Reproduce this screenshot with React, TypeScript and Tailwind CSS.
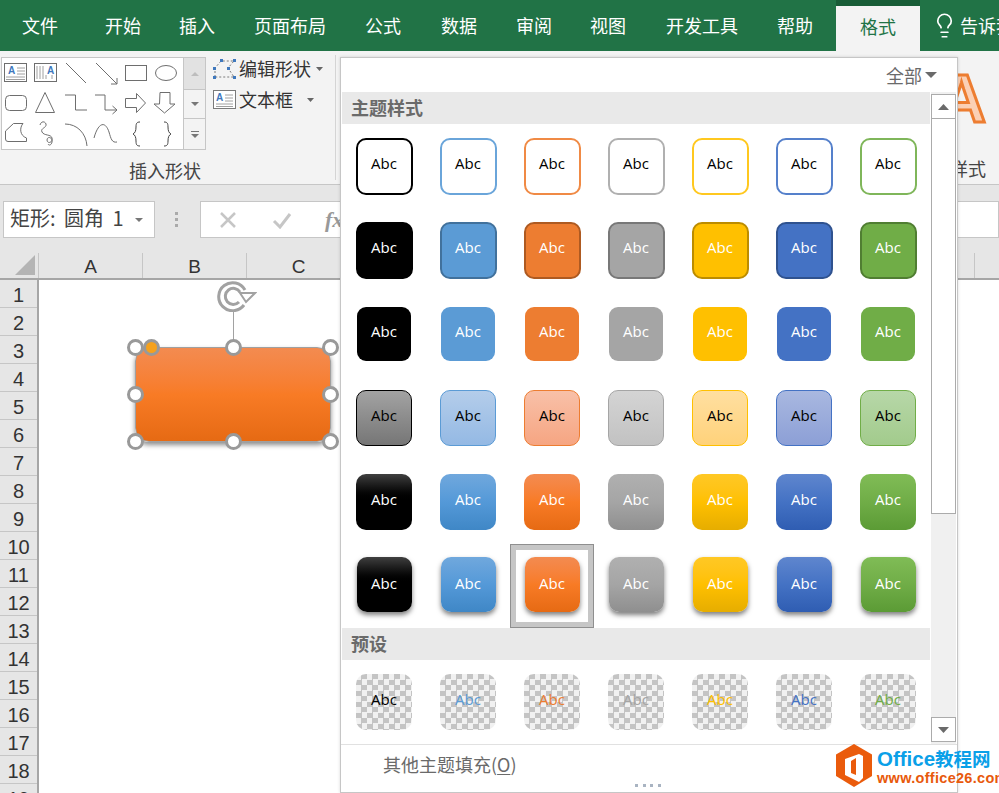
import { Lightbulb } from "lucide-react";

const CJK = "[font-family:'Noto_Sans_CJK_SC','Liberation_Sans',sans-serif]";

const TABS = [
  { label: "文件", cls: "ml-[22px]" },
  { label: "开始", cls: "ml-[47px]" },
  { label: "插入", cls: "ml-[38px]" },
  { label: "页面布局", cls: "ml-[39px]" },
  { label: "公式", cls: "ml-[39px]" },
  { label: "数据", cls: "ml-[40px]" },
  { label: "审阅", cls: "ml-[39px]" },
  { label: "视图", cls: "ml-[38px]" },
  { label: "开发工具", cls: "ml-[40px]" },
  { label: "帮助", cls: "ml-[39px]" },
];

const CHECKER =
  "bg-[conic-gradient(#c4c4c4_25%,#f1f1f1_0_50%,#c4c4c4_0_75%,#f1f1f1_0)] bg-[length:11px_11px]";

const ROW1 = ["border-black", "border-[#6aa5da]", "border-[#f08a45]", "border-[#b0b0b0]", "border-[#ffc81f]", "border-[#5580cb]", "border-[#7fb65a]"].map(
  (c) => `size-[57px] rounded-[10px] border-2 bg-white text-black ${c}`,
);

const ROW2 = [
  "border-black bg-black",
  "border-[#41719c] bg-[#5b9bd5]",
  "border-[#ae5a21] bg-[#ed7d31]",
  "border-[#787878] bg-[#a5a5a5]",
  "border-[#bc8c00] bg-[#ffc000]",
  "border-[#2f528f] bg-[#4472c4]",
  "border-[#507e32] bg-[#70ad47]",
].map((c) => `size-[57px] rounded-[10px] border-2 text-white ${c}`);

const ROW3 = ["bg-black", "bg-[#5b9bd5]", "bg-[#ed7d31]", "bg-[#a5a5a5]", "bg-[#ffc000]", "bg-[#4472c4]", "bg-[#70ad47]"].map(
  (c) => `size-[54px] rounded-[9px] text-white ${c}`,
);

const ROW4 = [
  "border-black bg-linear-to-b from-[#a3a3a3] to-[#767676]",
  "border-[#5b9bd5] bg-linear-to-b from-[#b4cdea] to-[#94b9e4]",
  "border-[#ed7d31] bg-linear-to-b from-[#f8c0a8] to-[#f6a582]",
  "border-[#a5a5a5] bg-linear-to-b from-[#d4d4d4] to-[#c2c2c2]",
  "border-[#ffc000] bg-linear-to-b from-[#ffdfa0] to-[#ffd27a]",
  "border-[#4472c4] bg-linear-to-b from-[#a9b8e0] to-[#8c9fd6]",
  "border-[#70ad47] bg-linear-to-b from-[#b7d7a8] to-[#a2cb8c]",
].map((c) => `size-[56px] rounded-[10px] border text-black ${c}`);

const GRADS = [
  "bg-linear-to-b from-[#404040] via-black to-black",
  "bg-linear-to-b from-[#70a8dd] via-[#5499d8] to-[#3f87c6]",
  "bg-linear-to-b from-[#f38b50] via-[#f87b25] to-[#e66a13]",
  "bg-linear-to-b from-[#b0b0b0] via-[#a5a5a5] to-[#8f8f8f]",
  "bg-linear-to-b from-[#ffc824] via-[#ffc000] to-[#e6ad00]",
  "bg-linear-to-b from-[#5f86ce] via-[#4472c4] to-[#2f5db2]",
  "bg-linear-to-b from-[#80bc56] via-[#70ad47] to-[#5b9b35]",
];

const ROW5 = GRADS.map((c) => `size-[56px] rounded-[10px] text-white ${c}`);
const ROW6 = GRADS.map((c) => `-mt-[4px] size-[55px] rounded-[10px] pt-[4px] text-white shadow-[0_3px_5px_rgba(0,0,0,0.5)] ${c}`);

const PRESET = ["text-black", "text-[#5b9bd5]", "text-[#ed7d31]", "text-[#a5a5a5]", "text-[#ffc000]", "text-[#4472c4]", "text-[#70ad47]"].map(
  (c) => `size-[56px] rounded-[10px] ${CHECKER} ${c}`,
);

function Tri({ className = "", w = 9, h = 5 }: { className?: string; w?: number; h?: number }) {
  return (
    <svg width={w} height={h} viewBox="0 0 10 5" preserveAspectRatio="none" className={className}>
      <polygon points="0,0 10,0 5,5" fill="currentColor" />
    </svg>
  );
}

function ShapeIcons() {
  const s = { fill: "none", stroke: "#6e6e6e", strokeWidth: 1 };
  return (
    <svg width="181" height="91" viewBox="3 58 181 91" className="block">
      <g {...s}>
        <rect x="5.500" y="63.500" width="22" height="18" />
        <path d="M18 68h8M18 71h8M18 74h8M7 77h19M7 79.500h19" stroke="#a0a0a0" />
        <rect x="35.500" y="63.500" width="22" height="18" />
        <path d="M38 66v13M41 66v13M44 66v13M47 75v4M53 75v4" stroke="#a0a0a0" />
        <path d="M67 63l20 20" />
        <path d="M97 63l21 21M112 84h6v-6" />
        <rect x="126.500" y="65.500" width="21" height="15" />
        <ellipse cx="167" cy="73" rx="10.500" ry="7.500" />
        <rect x="6.500" y="95.500" width="21" height="15" rx="4" />
        <path d="M46 92.500l9.500 20h-19z" />
        <path d="M66 95h10.500v15H88" />
        <path d="M96 95h10v15h11.500M113.500 106l4.500 4-4.500 4" />
        <path d="M126.500 98.500h11v-5l9 9.500-9 9.500v-5h-11z" />
        <path d="M161 92.500h10v11.500h5l-10.500 9-10.500-9h5.500z" />
        <path d="M6.500 131l8-7.500h9.500c-3.500 4-3.500 12 3.500 14.500v3.500H9q-2.500 0-2.500-2.500z" />
        <path d="M41 125C42 121 46 121 47 124C48 128 41 128 43 132C45 136 52 134 53 138C54 143 48 144 48 140C48 136 54 137 53 142C52.500 145 50 146 49 144" />
        <path d="M66 124c12 0 21 9 22 22" />
        <path d="M95 138c4-15 11-18 15-6 2 7 3 11 8 10" />
        <path d="M141 122c-3 0-4 1-4 5 0 4-1 6-3 7 2 1 3 3 3 7 0 4 1 5 4 5" stroke="#444" />
        <path d="M165 122c3 0 4 1 4 5 0 4 1 6 3 7-2 1-3 3-3 7 0 4-1 5-4 5" stroke="#444" />
      </g>
      <text x="9" y="74" fontSize="10" fontWeight="700" fill="#3f78bd" fontFamily="Liberation Sans">A</text>
      <text x="48" y="74" fontSize="10" fontWeight="700" fill="#3f78bd" fontFamily="Liberation Sans">A</text>
    </svg>
  );
}

function EditShapeIcon() {
  return (
    <svg width="24" height="22" viewBox="0 0 24 22">
      <path d="M2 19V10L8 3H21L15 10L21 19Z" fill="none" stroke="#7a7a7a" strokeDasharray="2 2" />
      <g fill="#3f78bd">
        <rect x="7" y="1" width="3" height="3" />
        <rect x="20" y="1" width="3" height="3" />
        <rect x="14" y="9" width="3" height="3" />
        <rect x="20" y="18" width="3" height="3" />
        <rect x="0" y="9" width="3" height="3" />
        <rect x="0" y="18" width="3" height="3" />
      </g>
    </svg>
  );
}

function TextBoxIcon() {
  return (
    <svg width="24" height="20" viewBox="0 0 24 20">
      <rect x="0.500" y="0.500" width="22" height="18" fill="#fff" stroke="#7a7a7a" />
      <path d="M12 5h8M12 8h8M12 11h8M3 14h17M3 16.500h17" stroke="#a0a0a0" />
      <text x="3" y="11" fontSize="10" fontWeight="700" fill="#3f78bd" fontFamily="Liberation Sans">A</text>
    </svg>
  );
}

function RotateIcon() {
  return (
    <svg width="40" height="32" viewBox="0 0 40 32" fill="none" stroke="#a2a2a2" strokeWidth="3">
      <path d="M28 10A14 14 0 1 0 27 25" />
      <path d="M23 12A8 8 0 1 0 22 22" />
      <polygon points="23,13 38,13 29,22" fill="#fff" strokeWidth="2" />
    </svg>
  );
}

function Handle({ className }: { className: string }) {
  return <div className={`absolute size-[17px] rounded-full border-[3px] border-[#999999] bg-white ${className}`} />;
}

function Abc({ className }: { className: string }) {
  return (
    <div className={`flex shrink-0 items-center justify-center ${className}`}>
      <span className="-mt-[6px] font-['Open_Sans',sans-serif] text-[15px] leading-none">Abc</span>
    </div>
  );
}

function Cell({ className, selected }: { className: string; selected?: boolean }) {
  return (
    <div
      className={`flex h-[84px] w-[84px] items-center justify-center ${
        selected ? "border border-[#8f8f8f] outline-[5px] -outline-offset-6 outline-[#c6c6c6]" : ""
      }`}
    >
      <Abc className={className} />
    </div>
  );
}

function SectionTitle({ children }: { children: string }) {
  return (
    <div className="flex h-[32px] items-center bg-[#e9e9e9] pb-[2px] pl-[9px] text-[18px] font-bold text-[#6a6a6a]">{children}</div>
  );
}

function StylePopup() {
  const rows = [ROW1, ROW2, ROW3, ROW4, ROW5, ROW6];
  return (
    <div className="absolute left-[340px] top-[57px] flex h-[736px] w-[618px] flex-col border border-[#c6c6c6] bg-white shadow-[0_0_3px_rgba(0,0,0,0.15)]">
      <div className="flex h-[34px] items-center justify-end gap-[3px] pr-[20px] text-[18px] text-[#6a6a6a]">
        全部
        <Tri w={12} h={6} className="text-[#6a6a6a]" />
      </div>
      <div className="flex h-[652px] pl-[1px]">
        <div className="w-[588px]">
          <SectionTitle>主题样式</SectionTitle>
          {rows.map((row, r) => (
            <div key={r} className="flex">
              {row.map((cls, c) => (
                <Cell key={c} className={cls} selected={r === 5 && c === 2} />
              ))}
            </div>
          ))}
          <SectionTitle>预设</SectionTitle>
          <div className="flex">
            {PRESET.map((cls, c) => (
              <Cell key={c} className={cls} />
            ))}
          </div>
        </div>
        <div className="ml-[1px] flex w-[25px] flex-col bg-[#f0f0f0] pt-[2px]">
          <div className="flex h-[25px] items-center justify-center border border-[#ababab] bg-white">
            <Tri w={11} h={6} className="rotate-180 text-[#6a6a6a]" />
          </div>
          <div className="-mt-[1px] h-[396px] border border-[#ababab] bg-white" />
          <div className="mt-auto mb-[2px] flex h-[25px] items-center justify-center border border-[#ababab] bg-white">
            <Tri w={11} h={6} className="text-[#6a6a6a]" />
          </div>
        </div>
      </div>
      <div className="relative flex-1 border-t border-[#e1e1e1] pl-[42px] pt-[4px] text-[18px] leading-[30px] text-[#6a6a6a]">
        其他主题填充(<span className="underline underline-offset-2">O</span>)
        <div className="absolute bottom-[5px] left-[294px] flex">
          {[0, 1, 2, 3].map((i) => (
            <div key={i} className="mr-[4.500px] size-[3px] bg-[#a9b4c2]" />
          ))}
        </div>
      </div>
    </div>
  );
}

function Ribbon() {
  return (
    <div className="flex h-[134px] border-b border-[#c6c6c6] bg-[#f3f3f3]">
      <div className="my-[4px] flex w-[336px] shrink-0 flex-col border-r border-[#d4d4d4]">
        <div className="flex pl-[1px] pt-[2px]">
          <div className="h-[93px] w-[183px] border border-[#c6c6c6] bg-white">
            <ShapeIcons />
          </div>
          <div className="flex h-[93px] w-[22px] flex-col border border-l-0 border-[#c6c6c6] text-[#777777]">
            <div className="flex h-[32px] items-center justify-center border-b border-[#c6c6c6] bg-[#e2e2e2]">
              <Tri w={8} h={4} className="rotate-180 text-[#bdbdbd]" />
            </div>
            <div className="flex h-[29px] items-center justify-center border-b border-[#c6c6c6]">
              <Tri w={8} h={4} />
            </div>
            <div className="flex flex-1 flex-col items-center justify-center gap-[2px]">
              <div className="h-[1px] w-[8px] bg-current" />
              <Tri w={8} h={4} />
            </div>
          </div>
          <div className="-mt-[4px] ml-[7px] flex flex-col text-[18px] text-[#333333]">
            <div className="flex h-[31px] items-center gap-[2px]">
              <EditShapeIcon />
              <span>编辑形状</span>
              <Tri w={7} h={4} className="ml-[3px] text-[#666666]" />
            </div>
            <div className="flex h-[31px] items-center gap-[2px]">
              <TextBoxIcon />
              <span>文本框</span>
              <Tri w={7} h={4} className="ml-[12px] text-[#666666]" />
            </div>
          </div>
        </div>
        <div className="w-[330px] pt-[7px] text-center text-[18px] leading-[26px] text-[#444444]">插入形状</div>
      </div>
      <div className="ml-auto flex w-[60px] flex-col items-end pr-[13px]">
        <div className="mt-[14px] h-[66px] font-['Liberation_Sans',sans-serif] text-[68px] font-bold leading-[66px] text-[#fbd0b5] [-webkit-text-stroke:3px_#ed7d31]">
          A
        </div>
        <div className="mt-[24px] text-[18px] leading-[26px] text-[#444444]">样式</div>
      </div>
    </div>
  );
}

function FormulaBar() {
  return (
    <div className="flex h-[66px] bg-[#e6e6e6] pl-[3px] pt-[16px]">
      <div className="flex h-[37px] w-[152px] items-center border border-[#c6c6c6] bg-white pb-[3px] pl-[6px] text-[20px] text-[#444444] [word-spacing:4px]">
        矩形: 圆角 1
        <Tri w={8} h={4} className="ml-[11px] mt-[3px] text-[#777777]" />
      </div>
      <div className="ml-[20px] mr-[22px] flex h-[37px] flex-col justify-center gap-[3px] pb-[1px]">
        <div className="size-[3px] bg-[#aaaaaa]" />
        <div className="size-[3px] bg-[#aaaaaa]" />
        <div className="size-[3px] bg-[#aaaaaa]" />
      </div>
      <div className="flex h-[37px] flex-1 items-center border border-[#c6c6c6] bg-white pl-[18px] text-[#c6c6c6]">
        <svg width="18" height="18" viewBox="0 0 18 18" fill="none" stroke="#c6c6c6" strokeWidth="2.500">
          <path d="M2 2l14 14M16 2L2 16" />
        </svg>
        <svg width="20" height="18" viewBox="0 0 20 18" fill="none" stroke="#c6c6c6" strokeWidth="3" className="ml-[35px]">
          <path d="M2 10l6 6L18 3" />
        </svg>
        <span className="ml-[33px] font-['Liberation_Serif',serif] text-[22px] font-bold italic text-[#999999]">fx</span>
      </div>
    </div>
  );
}

function Sheet() {
  const cols = ["A", "B", "C", "D", "E", "F", "G", "H", "I", "J"];
  const rows = Array.from({ length: 19 }, (_, i) => i + 1);
  return (
    <div>
      <div className="flex h-[29px] border-b-2 border-[#a6a6a6] bg-[#e6e6e6] pt-[2px]">
        <div className="flex w-[39px] shrink-0 items-end justify-end border-r border-[#c6c6c6] pb-[3px] pr-[3px]">
          <svg width="20" height="20" viewBox="0 0 20 20">
            <polygon points="20,0 20,20 0,20" fill="#b4b4b4" />
          </svg>
        </div>
        {cols.map((c) => (
          <div
            key={c}
            className="flex w-[104px] shrink-0 items-center justify-center border-r border-[#c6c6c6] pt-[3px] font-['Liberation_Sans',sans-serif] text-[19px] text-[#333333]"
          >
            {c}
          </div>
        ))}
      </div>
      <div className="w-[39px] border-r-2 border-[#a6a6a6] bg-[#e6e6e6]">
        {rows.map((n) => (
          <div
            key={n}
            className="flex h-[28px] items-center justify-center border-b border-[#c6c6c6] pt-[2px] font-['Liberation_Sans',sans-serif] text-[20px] text-[#333333]"
          >
            {n}
          </div>
        ))}
      </div>
    </div>
  );
}

function SelectedShape() {
  return (
    <div className="absolute left-[135px] top-[347px] h-[95px] w-[196px] rounded-[14px] border border-[#a0a0a0] bg-linear-to-b from-[#f38b50] via-[#f87b25] to-[#e66a13] shadow-[0_3px_5px_rgba(0,0,0,0.45)]">
      <div className="absolute -top-[38px] left-[97px] h-[38px] w-px bg-[#a2a2a2]" />
      <div className="absolute -top-[68px] left-[81px]">
        <RotateIcon />
      </div>
      <Handle className="-left-[9px] -top-[9px]" />
      <Handle className="left-[89px] -top-[9px]" />
      <Handle className="-right-[9px] -top-[9px]" />
      <Handle className="-left-[9px] top-[38px]" />
      <Handle className="-right-[9px] top-[38px]" />
      <Handle className="-bottom-[9px] -left-[9px]" />
      <Handle className="-bottom-[9px] left-[89px]" />
      <Handle className="-bottom-[9px] -right-[9px]" />
      <div className="absolute -top-[9px] left-[7px] size-[17px] rounded-full border-[3px] border-[#999999] bg-[#f5a11c]" />
    </div>
  );
}

function Watermark() {
  return (
    <div className="absolute left-[836px] top-[744px] flex items-center gap-[5px]">
      <svg width="36" height="43" viewBox="0 0 36 43">
        <polygon points="18,0 36,10.500 36,32 18,43 0,32 0,10.500" fill="#ea5b0c" />
        <path d="M9 15L23 10L27 12V34L23 38L9 31ZM15 17V29L20 31V14Z" fill="#fff" fillRule="evenodd" />
      </svg>
      <div className="flex flex-col whitespace-nowrap font-['Liberation_Sans',sans-serif] font-bold">
        <div className="text-[20.500px] leading-[22px] text-[#0aa0e8]">
          Office<span className={`text-[18.500px] ${CJK}`}>教程网</span>
        </div>
        <div className="mt-[1px] text-[14.500px] leading-[14px] tracking-[0.3px] text-[#e8590c]">www.office26.com</div>
      </div>
    </div>
  );
}

export default function App() {
  return (
    <div className={`relative h-[793px] w-[999px] overflow-hidden bg-white ${CJK}`}>
      <div className="flex h-[51px] items-center bg-[#217346] text-[18px] text-white">
        {TABS.map((t) => (
          <span key={t.label} className={`shrink-0 ${t.cls}`}>
            {t.label}
          </span>
        ))}
        <div className="ml-[23px] flex h-[51px] w-[84px] shrink-0 flex-col">
          <div className="h-[6px] bg-[#185c37]" />
          <div className="flex flex-1 items-center justify-center bg-[#f3f3f3] pb-[5px] text-[#217346]">格式</div>
        </div>
        <Lightbulb size={27} strokeWidth={1.500} className="ml-[11px] shrink-0" />
        <span className="ml-[2px] shrink-0 whitespace-nowrap">告诉我</span>
      </div>
      <Ribbon />
      <FormulaBar />
      <Sheet />
      <SelectedShape />
      <StylePopup />
      <Watermark />
    </div>
  );
}
